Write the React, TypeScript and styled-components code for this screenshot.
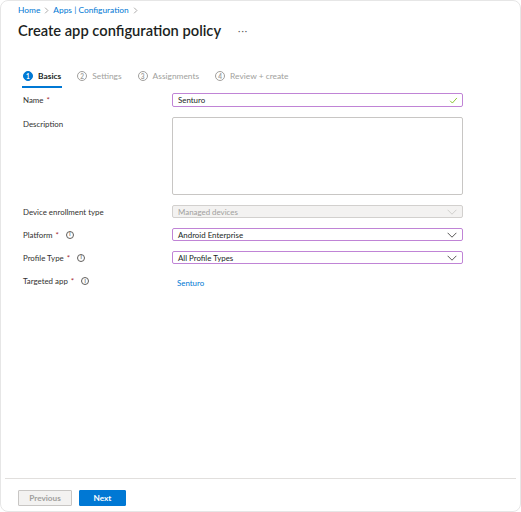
import styled, { createGlobalStyle } from "styled-components";

const GlobalStyle = createGlobalStyle`
  html, body {
    margin: 0;
    padding: 0;
    background: #ffffff;
  }
  body {
    font-family: Lato, "Open Sans", sans-serif;
    color: #323130;
  }
`;

const Window = styled.div`
  box-sizing: border-box;
  width: 521px;
  height: 512px;
  border: 1px solid #e6e6e6;
  border-radius: 8px;
  display: flex;
  flex-direction: column;
  overflow: hidden;
`;

const Header = styled.div`
  padding: 3px 0 0 17px;
`;

const Breadcrumb = styled.div`
  display: flex;
  align-items: center;
  gap: 4px;
  font-size: 8.4px;
  height: 12px;
  color: #0078d4;
`;

const Chevron = styled.span`
  display: flex;
  align-items: center;
`;

const TitleRow = styled.div`
  display: flex;
  align-items: center;
  margin-top: 3px;
  height: 22px;
`;

const Title = styled.h1`
  margin: 0;
  font-size: 14.7px;
  font-weight: 600;
  color: #201f1e;
`;

const More = styled.span`
  margin-left: 17px;
  font-size: 9px;
  color: #605e5c;
  letter-spacing: 1px;
`;

const Steps = styled.div`
  display: flex;
  align-items: center;
  margin: 26px 0 0 21px;
  height: 20px;
`;

const Step = styled.div<{ $active?: boolean }>`
  display: flex;
  align-items: center;
  gap: 5px;
  height: 20px;
  margin-right: 14px;
  font-size: 8.4px;
  font-weight: ${(p) => (p.$active ? 700 : 400)};
  color: ${(p) => (p.$active ? "#201f1e" : "#a19f9d")};
  border-bottom: 2px solid ${(p) => (p.$active ? "#0078d4" : "transparent")};
  padding: 0 1px;
`;

const StepNum = styled.span<{ $active?: boolean }>`
  box-sizing: border-box;
  width: 10px;
  height: 10px;
  border-radius: 50%;
  display: flex;
  align-items: center;
  justify-content: center;
  font-size: 6.5px;
  font-weight: 700;
  background: ${(p) => (p.$active ? "#0078d4" : "transparent")};
  color: ${(p) => (p.$active ? "#ffffff" : "#a19f9d")};
  border: 1px solid ${(p) => (p.$active ? "#0078d4" : "#a19f9d")};
`;

const Form = styled.div`
  display: grid;
  grid-template-columns: 149px 291px;
  row-gap: 10px;
  margin: 6px 0 0 22px;
  align-items: start;
`;

const Label = styled.div<{ $h?: number }>`
  display: flex;
  align-items: center;
  gap: 3px;
  height: ${(p) => p.$h ?? 13}px;
  font-size: 7.9px;
  color: #323130;
`;

const Req = styled.span`
  color: #a4262c;
`;

const Info = styled.span`
  box-sizing: border-box;
  width: 8px;
  height: 8px;
  border: 1px solid #605e5c;
  border-radius: 50%;
  margin-left: 4px;
  display: flex;
  align-items: center;
  justify-content: center;
  font-size: 5px;
  font-weight: 700;
  color: #605e5c;
  line-height: 1;
`;

const Field = styled.div<{ $h?: number; $disabled?: boolean; $accent?: boolean }>`
  box-sizing: border-box;
  height: ${(p) => p.$h ?? 14}px;
  display: flex;
  align-items: center;
  justify-content: space-between;
  padding: 0 4px 0 5px;
  font-size: 7.9px;
  border: 1px solid
    ${(p) => (p.$disabled ? "#d2d0ce" : p.$accent ? "#c084d6" : "#c8c6c4")};
  border-radius: 2px;
  background: ${(p) => (p.$disabled ? "#f3f2f1" : "#ffffff")};
  color: ${(p) => (p.$disabled ? "#a19f9d" : "#201f1e")};
`;

const Link = styled.a`
  height: 14px;
  display: flex;
  align-items: center;
  padding-left: 5px;
  font-size: 7.9px;
  color: #0078d4;
  text-decoration: none;
  margin-top: 2px;
`;

const Spacer = styled.div`
  flex: 1;
`;

const Footer = styled.div`
  margin: 0 4px;
  border-top: 1px solid #e1dfdd;
  padding: 11px 0 5px 13px;
  display: flex;
  gap: 7px;
`;

const Button = styled.button<{ $primary?: boolean }>`
  box-sizing: border-box;
  height: 16px;
  padding: 0;
  font-family: inherit;
  font-size: 8.2px;
  font-weight: 700;
  border-radius: 1px;
  width: ${(p) => (p.$primary ? 47 : 54)}px;
  border: 1px solid ${(p) => (p.$primary ? "#0078d4" : "#c8c6c4")};
  background: ${(p) => (p.$primary ? "#0078d4" : "#f3f2f1")};
  color: ${(p) => (p.$primary ? "#ffffff" : "#a19f9d")};
`;

const Check = () => (
  <svg width="9" height="9" viewBox="0 0 16 16">
    <path d="M2 8.5l4 4 8-9" fill="none" stroke="#6bb700" strokeWidth="1.4" />
  </svg>
);

const Caret = ({ color }: { color: string }) => (
  <svg width="10" height="6" viewBox="0 0 16 9" style={{ marginRight: 1 }}>
    <path d="M1 1l7 7 7-7" fill="none" stroke={color} strokeWidth="1.3" />
  </svg>
);

const Arrow = () => (
  <Chevron>
    <svg width="5" height="7" viewBox="0 0 6 10">
      <path d="M1 1l4 4-4 4" fill="none" stroke="#8a8886" strokeWidth="1" />
    </svg>
  </Chevron>
);

const steps = ["Basics", "Settings", "Assignments", "Review + create"];

const App = () => {
  return (
    <>
      <GlobalStyle />
      <Window>
        <Header>
          <Breadcrumb>
            <span>Home</span>
            <Arrow />
            <span>Apps | Configuration</span>
            <Arrow />
          </Breadcrumb>
          <TitleRow>
            <Title>Create app configuration policy</Title>
            <More>···</More>
          </TitleRow>
        </Header>
        <Steps>
          {steps.map((s, i) => (
            <Step key={s} $active={i === 0}>
              <StepNum $active={i === 0}>{i + 1}</StepNum>
              {s}
            </Step>
          ))}
        </Steps>
        <Form>
          <Label $h={14}>
            Name <Req>*</Req>
          </Label>
          <Field $accent>
            Senturo
            <Check />
          </Field>

          <Label $h={14}>Description</Label>
          <Field $h={78} />

          <Label>Device enrollment type</Label>
          <Field $h={13} $disabled>
            Managed devices
            <Caret color="#c8c6c4" />
          </Field>

          <Label>
            Platform <Req>*</Req>
            <Info>i</Info>
          </Label>
          <Field $h={13} $accent>
            Android Enterprise
            <Caret color="#323130" />
          </Field>

          <Label>
            Profile Type <Req>*</Req>
            <Info>i</Info>
          </Label>
          <Field $h={13} $accent>
            All Profile Types
            <Caret color="#323130" />
          </Field>

          <Label $h={14}>
            Targeted app <Req>*</Req>
            <Info>i</Info>
          </Label>
          <Link href="#">Senturo</Link>
        </Form>
        <Spacer />
        <Footer>
          <Button disabled>Previous</Button>
          <Button $primary>Next</Button>
        </Footer>
      </Window>
    </>
  );
};

export default App;
